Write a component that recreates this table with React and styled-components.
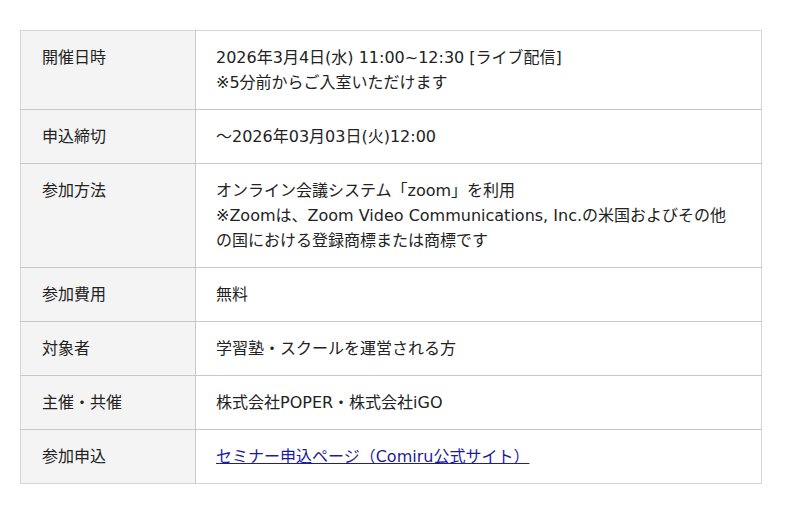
import React from 'react';
import styled, { createGlobalStyle } from 'styled-components';

const GlobalStyle = createGlobalStyle`
  body {
    margin: 0;
    background: #fff;
    font-family: "DejaVu Sans", "Noto Sans CJK JP", sans-serif;
    color: #222;
  }
`;

const Wrapper = styled.div`
  padding: 30px 20px;
`;

const Table = styled.table`
  width: 742px;
  border-collapse: collapse;
  border: 1px solid #d6d6d6;
  font-size: 16px;
  line-height: 25px;
`;

const Row = styled.tr`
  border-bottom: 1px solid #c8c8c8;
  &:last-child {
    border-bottom: 1px solid #d6d6d6;
  }
`;

const Label = styled.th`
  width: 133px;
  padding: 14px 20px 14px 21px;
  background: #f4f4f4;
  border-right: 1px solid #c8c8c8;
  font-weight: normal;
  text-align: left;
  vertical-align: top;
`;

const Value = styled.td`
  padding: 14px 20px 14px 20px;
  vertical-align: top;
`;

const Link = styled.a`
  color: #1c1c9c;
  text-decoration: underline;
`;

const rows = [
  ['開催日時', <>2026年3月4日(水) 11:00~12:30 [ライブ配信]<br />※5分前からご入室いただけます</>],
  ['申込締切', '～2026年03月03日(火)12:00'],
  ['参加方法', <>オンライン会議システム「zoom」を利用<br />※Zoomは、Zoom Video Communications, Inc.の米国およびその他の国における登録商標または商標です</>],
  ['参加費用', '無料'],
  ['対象者', '学習塾・スクールを運営される方'],
  ['主催・共催', '株式会社POPER・株式会社iGO'],
  ['参加申込', <Link href="#">セミナー申込ページ（Comiru公式サイト）</Link>],
];

export default function App() {
  return (
    <>
      <GlobalStyle />
      <Wrapper>
        <Table>
          <tbody>
            {rows.map(([label, value]) => (
              <Row key={label}>
                <Label>{label}</Label>
                <Value>{value}</Value>
              </Row>
            ))}
          </tbody>
        </Table>
      </Wrapper>
    </>
  );
}
